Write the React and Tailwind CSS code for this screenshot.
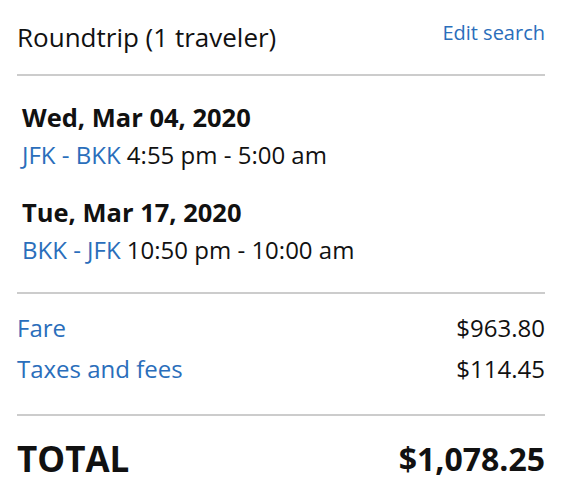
import React from 'react';

const trip = {
  title: 'Roundtrip (1 traveler)',
  legs: [
    { date: 'Wed, Mar 04, 2020', route: 'JFK - BKK', time: '4:55 pm - 5:00 am' },
    { date: 'Tue, Mar 17, 2020', route: 'BKK - JFK', time: '10:50 pm - 10:00 am' },
  ],
  charges: [
    { label: 'Fare', amount: '$963.80' },
    { label: 'Taxes and fees', amount: '$114.45' },
  ],
  total: '$1,078.25',
};

function Leg({ leg, first }) {
  return (
    <div className={first ? '' : 'mt-[25px]'}>
      <div className="text-[25.5px] leading-[32px] font-bold">{leg.date}</div>
      <div className="mt-[6px] text-[24px] leading-[32px]">
        <a href="#" className="text-[#2a6ebb]">{leg.route}</a> {leg.time}
      </div>
    </div>
  );
}

export default function App() {
  return (
    <div className="min-h-screen bg-white px-[17px] text-[#111] font-['Open_Sans',sans-serif]">
      <div className="flex items-start justify-between pt-[19px] pb-[19px] border-b-2 border-[#cccccc]">
        <div className="text-[26px] leading-[36px]">{trip.title}</div>
        <a href="#" className="text-[20px] leading-[28px] text-[#2a6ebb]">Edit search</a>
      </div>

      <div className="pl-[5px] pt-[25px] pb-[26px] border-b-2 border-[#cccccc]">
        {trip.legs.map((leg, i) => (
          <Leg key={leg.date} leg={leg} first={i === 0} />
        ))}
      </div>

      <div className="pt-[18px] pb-[29px] flex flex-col gap-[9px] border-b-2 border-[#cccccc]">
        {trip.charges.map((c) => (
          <div key={c.label} className="flex justify-between text-[24px] leading-[32px]">
            <a href="#" className="text-[#2a6ebb]">{c.label}</a>
            <span>{c.amount}</span>
          </div>
        ))}
      </div>

      <div className="pt-[23px] flex items-start justify-between font-bold">
        <div className="text-[35px] leading-[40px]">TOTAL</div>
        <div className="text-[32px] leading-[40px]">{trip.total}</div>
      </div>
    </div>
  );
}
